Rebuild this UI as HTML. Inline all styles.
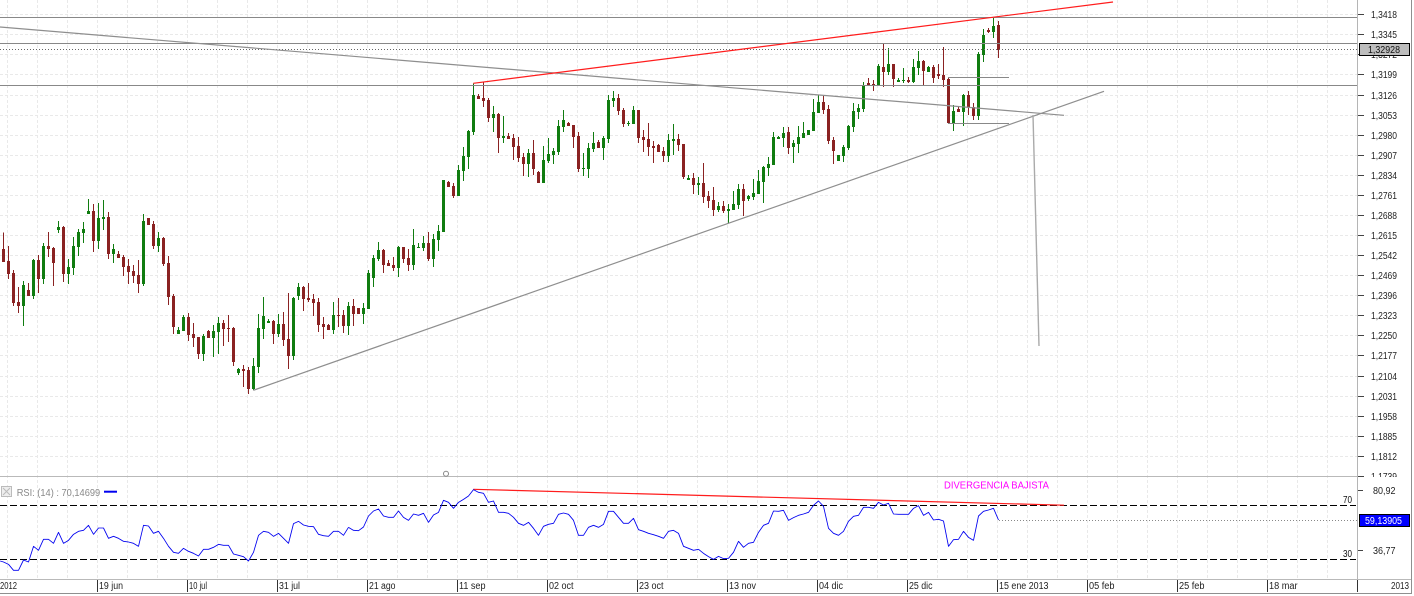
<!DOCTYPE html>
<html><head><meta charset="utf-8"><title>EUR/USD</title>
<style>
html,body{margin:0;padding:0;background:#fff;overflow:hidden}
svg{display:block;position:absolute;left:0;top:0}
text{font-family:"Liberation Sans",sans-serif;font-size:10px;fill:#222}
</style></head><body>
<svg width="1414" height="596" viewBox="0 0 1414 596" xmlns="http://www.w3.org/2000/svg">
<rect width="1414" height="596" fill="#fff"/>
<!-- grid -->
<g stroke="#e9e9e9" stroke-width="1" stroke-dasharray="3 2" fill="none" shape-rendering="crispEdges">
<path d="M0 14.5H1357M0 34.5H1357M0 54.5H1357M0 74.5H1357M0 95.5H1357M0 115.5H1357M0 135.5H1357M0 155.5H1357M0 175.5H1357M0 195.5H1357M0 215.5H1357M0 235.5H1357M0 255.5H1357M0 275.5H1357M0 295.5H1357M0 315.5H1357M0 335.5H1357M0 355.5H1357M0 376.5H1357M0 396.5H1357M0 416.5H1357M0 436.5H1357M0 456.5H1357"/>
<path d="M7.5 0V579M37.5 0V579M67.5 0V579M97.5 0V579M127.5 0V579M157.5 0V579M187.5 0V579M217.5 0V579M247.5 0V579M277.5 0V579M307.5 0V579M337.5 0V579M367.5 0V579M397.5 0V579M427.5 0V579M457.5 0V579M487.5 0V579M517.5 0V579M547.5 0V579M577.5 0V579M607.5 0V579M637.5 0V579M667.5 0V579M697.5 0V579M727.5 0V579M757.5 0V579M787.5 0V579M817.5 0V579M847.5 0V579M877.5 0V579M907.5 0V579M937.5 0V579M967.5 0V579M997.5 0V579M1027.5 0V579M1057.5 0V579M1087.5 0V579M1117.5 0V579M1147.5 0V579M1177.5 0V579M1207.5 0V579M1237.5 0V579M1267.5 0V579M1297.5 0V579M1327.5 0V579"/>
</g>
<!-- frame -->
<g fill="none" shape-rendering="crispEdges">
<path d="M0 476.5H1357M0 579.5H1411" stroke="#b9b9b9"/>
<path d="M1357.5 0V579" stroke="#b5b5b5"/>
<path d="M0 593.5H1411.5M1411.5 0V594" stroke="#8f8f8f"/>
<path d="M1358 14.5h6M1358 34.5h6M1358 54.5h6M1358 74.5h6M1358 95.5h6M1358 115.5h6M1358 135.5h6M1358 155.5h6M1358 175.5h6M1358 195.5h6M1358 215.5h6M1358 235.5h6M1358 255.5h6M1358 275.5h6M1358 295.5h6M1358 315.5h6M1358 335.5h6M1358 355.5h6M1358 376.5h6M1358 396.5h6M1358 416.5h6M1358 436.5h6M1358 456.5h6M1358 490.5h5M1358 550.5h5" stroke="#444"/>
<path d="M97.5 580V592M187.5 580V592M277.5 580V592M367.5 580V592M457.5 580V592M547.5 580V592M637.5 580V592M727.5 580V592M817.5 580V592M907.5 580V592M997.5 580V592M1087.5 580V592M1177.5 580V592M1267.5 580V592M1357.5 580V592" stroke="#333"/>
</g>
<!-- candles -->
<g fill="none" shape-rendering="crispEdges">
<g transform="translate(.17 190) scale(.33333)">
<path stroke="#8a2222" stroke-width="3" d="M10 128V216M25 168V267M40 240V348M55 291V369M85 279V318M115 195V309M145 126V201M160 171V288M190 108V276M280 42V186M325 66V207M355 183V204M370 195V258M385 207V282M400 225V279M415 210V309M445 84V105M460 93V177M490 141V228M505 198V345M520 312V432M565 369V453M580 399V471M595 441V507M625 420V444M670 390V468M685 375V456M700 411V528M730 525V591M745 531V612M820 390V462M850 366V468M865 309V537M910 288V363M925 279V336M940 312V378M955 324V426M970 381V447M985 402V420M1015 324V411M1030 360V429"/>
<path stroke="#8a2222" stroke-width="9" d="M10 177V216M25 213V252M40 249V339M55 336V348M85 300V318M115 210V267M145 168V177M160 174V219M190 111V252M280 63V153M325 81V192M355 192V204M370 201V231M385 228V246M400 243V258M415 255V282M445 84V105M460 102V168M490 144V222M505 219V321M520 318V411M565 381V435M580 432V444M595 441V492M625 423V444M670 399V417M685 414V417M700 414V516M730 537V543M745 540V597M820 393V432M850 402V450M865 447V498M910 291V327M925 324V330M940 327V339M955 336V405M970 402V411M985 405V420M1015 375V378M1030 375V408"/>
<path stroke="#107c10" stroke-width="3" d="M70 273V408M100 207V327M130 159V282M175 93V129M205 207V282M220 141V255M235 117V198M250 96V159M265 27V72M295 39V177M310 30V120M340 162V219M430 72V288M475 126V186M535 411V432M550 375V423M610 432V513M640 405V501M655 381V492M715 534V555M760 504V600M775 372V549M790 321V447M805 387V399M835 372V441M880 321V510M895 279V330M1000 336V432M1045 336V435"/>
<path stroke="#107c10" stroke-width="9" d="M70 285V348M100 210V318M130 168V267M175 111V120M205 231V252M220 168V234M235 126V171M250 117V129M265 63V72M295 84V153M310 81V87M340 177V192M430 93V282M475 144V168M535 420V432M550 381V423M610 438V492M640 423V444M655 399V426M715 537V549M760 528V597M775 414V531M790 378V417M805 393V399M835 402V432M880 324V498M895 291V318M1000 375V420M1045 348V408"/>
</g>
<g transform="translate(340.17 225) scale(.33333)">
<path stroke="#8a2222" stroke-width="3" d="M40 222V303M55 249V267M130 72V144M145 105V123M160 96V138M190 66V114M205 72V138M265 21V108"/>
<path stroke="#8a2222" stroke-width="9" d="M40 243V267M55 249V267M130 75V120M145 114V123M160 120V129M190 66V102M205 99V120M265 54V102"/>
<path stroke="#107c10" stroke-width="3" d="M70 234V297M85 135V252M100 90V186M115 51V108M175 63V156M220 12V135M235 54V69M250 33V78M280 27V126"/>
<path stroke="#107c10" stroke-width="9" d="M70 249V267M85 144V252M100 99V159M115 75V102M175 66V129M220 60V120M235 66V69M250 54V69M280 42V102"/>
</g>
<g transform="translate(350.17 70) scale(.33333)">
<path stroke="#8a2222" stroke-width="3" d="M295 333V351M310 339V384M385 72V87M400 36V111M415 84V156M445 129V249M475 189V207M490 192V270M505 201V276M520 249V318M550 210V315M565 303V339M655 156V168M670 165V234M685 186V306M745 210V234M805 72V135M820 114V171M865 120V219M880 180V246M895 159V258M910 213V279M925 222V246M940 231V276M985 192V243M1000 222V327"/>
<path stroke="#8a2222" stroke-width="9" d="M295 336V351M310 348V378M385 78V87M400 84V93M415 90V144M445 132V204M475 198V207M490 204V231M505 228V264M520 261V282M550 249V297M565 306V339M655 159V168M670 165V201M685 198V297M745 216V234M805 84V123M820 120V162M865 120V204M880 201V210M895 207V231M910 228V234M925 225V246M940 243V258M985 207V225M1000 222V321"/>
<path stroke="#107c10" stroke-width="3" d="M265 465V543M280 330V486M325 285V378M340 231V333M355 180V297M370 40V195M430 108V186M460 138V219M535 237V321M580 228V339M595 204V279M610 234V282M625 150V255M640 120V186M700 249V318M715 219V324M730 186V246M760 198V270M775 75V219M790 63V111M835 153V168M850 108V162M955 192V276M970 162V255M1015 315V330"/>
<path stroke="#107c10" stroke-width="9" d="M265 483V510M280 330V486M325 300V378M340 258V303M355 183V261M370 75V186M430 132V144M460 198V204M535 249V282M580 270V339M595 252V273M610 243V255M625 168V246M640 150V171M700 294V297M715 234V297M730 219V237M760 204V234M775 90V207M790 84V93M835 159V162M850 120V162M955 210V258M970 207V213M1015 324V330"/>
</g>
<g transform="translate(690.17 0) scale(.33333)">
<path stroke="#8a2222" stroke-width="3" d="M10 519V582M40 489V609M55 573V624M70 561V648M100 603V639M160 552V648M295 381V462M400 288V342M415 315V432M430 411V492M535 234V255M550 240V273M580 132V261M610 192V261M655 231V249M700 180V255M730 195V249M745 192V237M760 141V261M775 234V372M805 321V336M835 273V345M850 309V360M895 84V99M925 63V174"/>
<path stroke="#8a2222" stroke-width="9" d="M10 534V555M40 549V591M55 588V603M70 600V630M100 618V633M160 567V603M295 396V444M400 306V330M415 327V423M430 420V453M535 249V255M550 252V255M580 201V216M610 192V237M655 240V246M700 183V213M730 201V234M745 222V228M760 225V240M775 237V369M805 327V336M835 285V321M850 321V348M895 90V96M925 75V150"/>
<path stroke="#107c10" stroke-width="3" d="M25 531V585M85 606V636M115 612V669M130 573V630M145 552V627M175 585V603M190 537V600M205 510V582M220 498V609M235 471V528M250 396V495M265 408V417M280 381V441M310 420V489M325 378V459M340 366V414M355 390V405M370 297V393M385 285V339M445 465V483M460 435V486M475 375V450M490 309V396M505 312V357M520 246V336M565 192V255M595 144V225M625 234V246M640 204V249M670 177V249M685 153V225M715 198V216M790 315V393M820 282V378M865 156V360M880 87V186M910 54V114"/>
<path stroke="#107c10" stroke-width="9" d="M25 549V555M85 618V630M115 627V633M130 612V630M145 567V615M175 588V597M190 579V591M205 543V582M220 501V546M235 492V504M250 411V495M265 411V417M280 399V414M310 429V441M325 411V432M340 399V414M355 390V405M370 336V393M385 306V339M445 465V483M460 441V468M475 378V444M490 333V381M505 324V336M520 258V327M565 198V255M595 192V216M625 240V246M640 240V243M670 201V246M685 183V204M715 201V216M790 333V369M820 285V336M865 162V348M880 105V165M910 78V96"/>
</g>
</g>
<!-- drawn lines -->
<g fill="none">
<path d="M0 17.5H1357M0 43.5H1357M0 85.5H1357M948 77.5H1009M948 123.5H1009" stroke="#888" shape-rendering="crispEdges"/>
<path d="M0 49.5H1357" stroke="#666" stroke-dasharray="1 2" shape-rendering="crispEdges"/>
<path d="M0 27L1064 115.3" stroke="#8e8e8e" stroke-width="1.2"/>
<path d="M253.3 390.3L1104 91.3" stroke="#8e8e8e" stroke-width="1.2"/>
<path d="M1033 115L1039 346" stroke="#aaa" stroke-width="1.4"/>
<path d="M473.3 83.3L1113 2" stroke="#ff1c1c" stroke-width="1.2"/>
<circle cx="446" cy="473.8" r="2.5" stroke="#888" fill="#fff"/>
</g>
<!-- RSI -->
<g fill="none">
<path d="M0 505.5H1356M0 559.5H1356" stroke="#000" stroke-dasharray="7 3" shape-rendering="crispEdges"/>
<path d="M999 520.5H1358" stroke="#888" stroke-dasharray="1 2" shape-rendering="crispEdges"/>
<path d="M473.3 489.3L1064 505.2" stroke="#ff1c1c" stroke-width="1.2"/>
<g stroke="#0000f0" stroke-width="2.6" stroke-linejoin="round">
<polyline transform="translate(.17 465) scale(.33333)" points="0,288 10,291 25,298 40,316 55,316 70,285 85,291 100,244 115,256 130,223 145,223 160,235 175,202 190,235 205,226 220,208 235,199 250,196 265,181 280,208 295,189 310,189 325,220 340,214 355,220 370,229 385,231 400,235 415,244 430,181 445,183 460,205 475,199 490,220 505,244 520,262 535,265 550,250 565,259 580,265 595,273 610,253 625,253 640,247 655,238 670,241 685,241 700,267 715,271 730,275 745,288 760,262 775,211 790,199 805,202 820,214 835,205 850,220 865,235 880,176 895,169 910,180 925,184 940,185 955,208 970,212 985,214 1000,199 1015,199 1030,211 1045,187"/>
<polyline transform="translate(350.17 465) scale(.33333)" points="-5,187 10,196 25,197 40,186 55,153 70,138 85,132 100,153 115,157 130,157 145,138 160,157 175,166 190,147 205,151 220,145 235,172 250,150 265,142 280,106 295,112 310,130 325,112 340,103 355,93 370,74 385,82 400,85 415,112 430,108 445,142 460,142 475,145 490,157 505,175 520,181 535,172 550,190 565,211 580,184 595,178 610,175 625,148 640,144 655,148 670,166 685,211 700,211 715,187 730,181 745,187 760,178 775,139 790,139 805,157 820,175 835,175 850,160 865,194 880,199 895,205 910,209 925,214 940,220 955,199 970,196 985,205 1000,244 1015,250 1030,256 1045,253"/>
<polyline transform="translate(700.17 465) scale(.33333)" points="-5,253 10,265 25,275 40,283 55,274 70,281 85,280 100,262 115,229 130,247 145,235 160,232 175,202 190,181 205,175 220,138 235,139 250,136 265,166 280,158 295,151 310,147 325,142 340,121 355,108 370,124 385,190 400,205 415,211 430,199 445,169 460,154 475,151 490,127 505,127 520,130 535,112 550,120 565,115 580,147 595,148 610,148 625,148 640,130 655,122 670,151 685,142 700,165 715,163 730,168 745,244 760,224 775,223 790,199 805,217 820,226 835,153 850,139 865,135 880,130 895,165"/>
</g>
<rect x="1.5" y="486.5" width="10" height="10" stroke="#bbb" fill="#eee" shape-rendering="crispEdges"/>
<path d="M3 488l7 7M10 488l-7 7" stroke="#bbb"/>
<path d="M104 491.7H117" stroke="#0000f0" stroke-width="2"/>
</g>
<!-- y-axis labels -->
<g>
<text x="1371" y="18" textLength="26" lengthAdjust="spacingAndGlyphs">1,3418</text>
<text x="1371" y="38" textLength="26" lengthAdjust="spacingAndGlyphs">1,3345</text>
<text x="1371" y="58" textLength="26" lengthAdjust="spacingAndGlyphs">1,3272</text>
<text x="1371" y="78" textLength="26" lengthAdjust="spacingAndGlyphs">1,3199</text>
<text x="1371" y="99" textLength="26" lengthAdjust="spacingAndGlyphs">1,3126</text>
<text x="1371" y="119" textLength="26" lengthAdjust="spacingAndGlyphs">1,3053</text>
<text x="1371" y="139" textLength="26" lengthAdjust="spacingAndGlyphs">1,2980</text>
<text x="1371" y="159" textLength="26" lengthAdjust="spacingAndGlyphs">1,2907</text>
<text x="1371" y="179" textLength="26" lengthAdjust="spacingAndGlyphs">1,2834</text>
<text x="1371" y="199" textLength="26" lengthAdjust="spacingAndGlyphs">1,2761</text>
<text x="1371" y="219" textLength="26" lengthAdjust="spacingAndGlyphs">1,2688</text>
<text x="1371" y="239" textLength="26" lengthAdjust="spacingAndGlyphs">1,2615</text>
<text x="1371" y="259" textLength="26" lengthAdjust="spacingAndGlyphs">1,2542</text>
<text x="1371" y="279" textLength="26" lengthAdjust="spacingAndGlyphs">1,2469</text>
<text x="1371" y="299" textLength="26" lengthAdjust="spacingAndGlyphs">1,2396</text>
<text x="1371" y="319" textLength="26" lengthAdjust="spacingAndGlyphs">1,2323</text>
<text x="1371" y="339" textLength="26" lengthAdjust="spacingAndGlyphs">1,2250</text>
<text x="1371" y="359" textLength="26" lengthAdjust="spacingAndGlyphs">1,2177</text>
<text x="1371" y="380" textLength="26" lengthAdjust="spacingAndGlyphs">1,2104</text>
<text x="1371" y="400" textLength="26" lengthAdjust="spacingAndGlyphs">1,2031</text>
<text x="1371" y="420" textLength="26" lengthAdjust="spacingAndGlyphs">1,1958</text>
<text x="1371" y="440" textLength="26" lengthAdjust="spacingAndGlyphs">1,1885</text>
<text x="1371" y="460" textLength="26" lengthAdjust="spacingAndGlyphs">1,1812</text>
<text x="1371" y="480" textLength="26" lengthAdjust="spacingAndGlyphs">1,1739</text>
<rect x="1358" y="477" width="52" height="8" fill="#fff" stroke="none"/>
<path d="M1358 476.5h6" stroke="#444" shape-rendering="crispEdges"/>
<text x="1373" y="494" textLength="22.5" lengthAdjust="spacingAndGlyphs">80,92</text>
<text x="1373" y="554" textLength="22.5" lengthAdjust="spacingAndGlyphs">36,77</text>
<text x="1343" y="503" textLength="9" lengthAdjust="spacingAndGlyphs" style="fill:#111">70</text>
<text x="1343" y="557" textLength="9" lengthAdjust="spacingAndGlyphs" style="fill:#111">30</text>
<rect x="1359.5" y="43.5" width="50" height="12" fill="#bdbdbd" stroke="#000" shape-rendering="crispEdges"/>
<text x="1368" y="53" textLength="32" lengthAdjust="spacingAndGlyphs" style="fill:#111">1,32928</text>
<rect x="1359.5" y="514.5" width="50" height="12" fill="#0000ff" stroke="#000" shape-rendering="crispEdges"/>
<text x="1365" y="524" textLength="37" lengthAdjust="spacingAndGlyphs" style="fill:#fff">59,13905</text>
</g>
<!-- x-axis labels -->
<g>
<text x="0" y="589" textLength="17" lengthAdjust="spacingAndGlyphs">2012</text>
<text x="99" y="589" textLength="24" lengthAdjust="spacingAndGlyphs">19 jun</text>
<text x="189" y="589" textLength="18" lengthAdjust="spacingAndGlyphs">10 jul</text>
<text x="279" y="589" textLength="21" lengthAdjust="spacingAndGlyphs">31 jul</text>
<text x="369" y="589" textLength="26.5" lengthAdjust="spacingAndGlyphs">21 ago</text>
<text x="459" y="589" textLength="26.5" lengthAdjust="spacingAndGlyphs">11 sep</text>
<text x="549" y="589" textLength="24.5" lengthAdjust="spacingAndGlyphs">02 oct</text>
<text x="639" y="589" textLength="24.5" lengthAdjust="spacingAndGlyphs">23 oct</text>
<text x="729" y="589" textLength="27" lengthAdjust="spacingAndGlyphs">13 nov</text>
<text x="819" y="589" textLength="24" lengthAdjust="spacingAndGlyphs">04 dic</text>
<text x="909" y="589" textLength="23.5" lengthAdjust="spacingAndGlyphs">25 dic</text>
<text x="999" y="589" textLength="49.5" lengthAdjust="spacingAndGlyphs">15 ene 2013</text>
<text x="1089" y="589" textLength="25.5" lengthAdjust="spacingAndGlyphs">05 feb</text>
<text x="1179" y="589" textLength="25.5" lengthAdjust="spacingAndGlyphs">25 feb</text>
<text x="1269" y="589" textLength="28.5" lengthAdjust="spacingAndGlyphs">18 mar</text>
<text x="1391" y="589" textLength="18" lengthAdjust="spacingAndGlyphs">2013</text>
</g>
<text x="16.7" y="496" textLength="83.5" lengthAdjust="spacingAndGlyphs" style="fill:#888">RSI: (14) : 70,14699</text>
<text x="944" y="488.7" textLength="105" lengthAdjust="spacingAndGlyphs" style="fill:#ff00ff">DIVERGENCIA BAJISTA</text>
</svg>
</body></html>
